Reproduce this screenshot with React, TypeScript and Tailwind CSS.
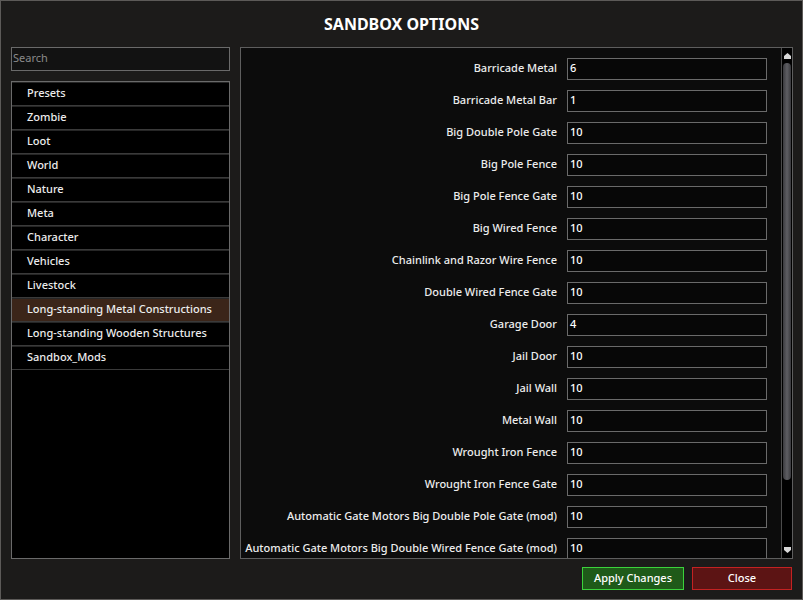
import React from "react";

const categories = [
  "Presets",
  "Zombie",
  "Loot",
  "World",
  "Nature",
  "Meta",
  "Character",
  "Vehicles",
  "Livestock",
  "Long-standing Metal Constructions",
  "Long-standing Wooden Structures",
  "Sandbox_Mods",
];

const options: [string, string][] = [
  ["Barricade Metal", "6"],
  ["Barricade Metal Bar", "1"],
  ["Big Double Pole Gate", "10"],
  ["Big Pole Fence", "10"],
  ["Big Pole Fence Gate", "10"],
  ["Big Wired Fence", "10"],
  ["Chainlink and Razor Wire Fence", "10"],
  ["Double Wired Fence Gate", "10"],
  ["Garage Door", "4"],
  ["Jail Door", "10"],
  ["Jail Wall", "10"],
  ["Metal Wall", "10"],
  ["Wrought Iron Fence", "10"],
  ["Wrought Iron Fence Gate", "10"],
  ["Automatic Gate Motors Big Double Pole Gate (mod)", "10"],
  ["Automatic Gate Motors Big Double Wired Fence Gate (mod)", "10"],
];

const selected = "Long-standing Metal Constructions";

function Scrollbar() {
  return (
    <div className="w-[12px] shrink-0 flex flex-col border border-[#4a4a4a] bg-black my-[-1px] mr-[-1px]">
      <div className="h-[15px] flex items-center justify-center">
        <svg width="7" height="6" viewBox="0 0 7 6">
          <path d="M3.5 0 L7 3 L7 6 L0 6 L0 3 Z" fill="#d8d8d8" />
        </svg>
      </div>
      <div className="h-[417px] mx-[1px] rounded-[5px] bg-[linear-gradient(90deg,#3a3a3e,#5e5e63_50%,#3a3a3e)]" />
      <div className="flex-1" />
      <div className="h-[16px] flex items-center justify-center">
        <svg width="7" height="6" viewBox="0 0 7 6">
          <path d="M0 0 L7 0 L7 3 L3.5 6 L0 3 Z" fill="#d8d8d8" />
        </svg>
      </div>
    </div>
  );
}

export default function App() {
  return (
    <div
      className="w-[803px] h-[600px] bg-[#1c1b1a] border border-[#5c5a58] flex flex-col text-[#ececec] overflow-hidden"
      style={{ fontFamily: '"Noto Sans", "Open Sans", sans-serif' }}
    >
      <div className="h-[46px] shrink-0 flex items-center justify-center text-[16px] font-bold text-white">
        SANDBOX OPTIONS
      </div>
      <div className="flex flex-1 min-h-0 pl-[10px] pr-[9px] gap-[10px]">
        <div className="w-[219px] flex flex-col gap-[10px]">
          <div className="h-[24px] border border-[#6a6a6a] bg-[#121212] flex items-center px-[1px] pb-[1px] text-[11px] text-[#8a8a8a]">
            Search
          </div>
          <div className="h-[478px] border border-[#6a6a6a] bg-black flex flex-col">
            {categories.map((c) => (
              <div
                key={c}
                className={`h-[24px] shrink-0 flex items-center pl-[15px] pb-[2px] text-[11px] font-medium border-b border-[#3a3a3a] border-t-[#262626] border-t ${
                  c === selected ? "bg-[#3b2519]" : ""
                }`}
              >
                {c}
              </div>
            ))}
          </div>
        </div>
        <div className="flex-1 flex flex-col">
          <div className="h-[512px] border border-[#5e5e5e] bg-[#0c0c0c] flex overflow-hidden">
            <div className="flex-1 flex flex-col gap-[10px] pt-[10px] pr-[14px] overflow-hidden">
              {options.map(([label, value]) => (
                <div key={label} className="h-[22px] shrink-0 flex items-center justify-end gap-[10px]">
                  <span className="text-[11px] font-medium text-[#ececec] whitespace-nowrap pb-[2px]">{label}</span>
                  <div className="w-[200px] h-[22px] border border-[#6a6a6a] bg-[#070707] flex items-center px-[2px] pb-[2px] text-[11px] font-medium text-white">
                    {value}
                  </div>
                </div>
              ))}
            </div>
            <Scrollbar />
          </div>
          <div className="flex justify-end gap-[8px] pt-[8px] pr-[1px]">
            <button className="w-[102px] h-[23px] border border-[#3bd23b] bg-[#1f5a19] text-[11px] font-medium text-white pb-[1px]">
              Apply Changes
            </button>
            <button className="w-[100px] h-[23px] border border-[#c42222] bg-[#5c1414] text-[11px] font-medium text-white pb-[1px]">
              Close
            </button>
          </div>
        </div>
      </div>
    </div>
  );
}
